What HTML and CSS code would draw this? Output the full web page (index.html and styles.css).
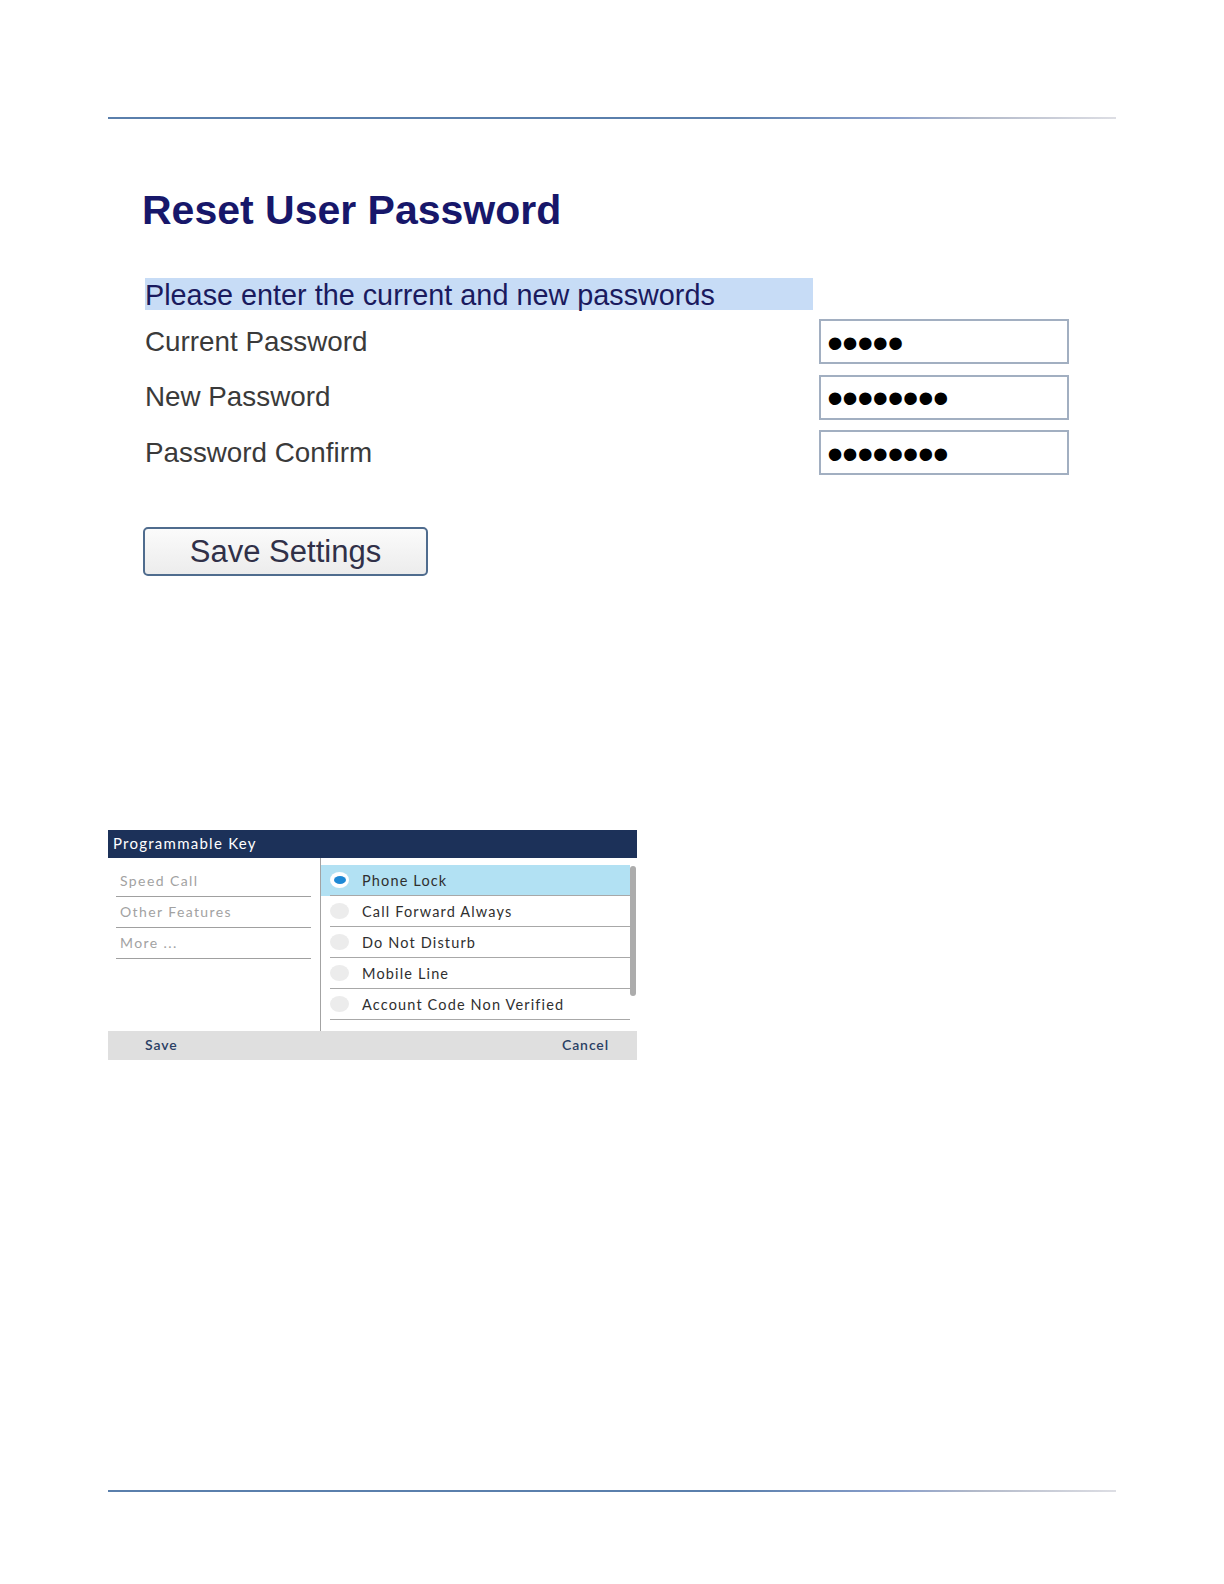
FILE: index.html
```html
<!DOCTYPE html>
<html lang="en">
<head>
  <meta charset="UTF-8">
  <title>Reset User Password</title>
  <meta name="viewport" content="width=device-width, initial-scale=1">
  <link rel="stylesheet" href="styles.css">
</head>
<body>
  <div class="page">
    <div class="rule"></div>

    <section class="reset">
      <h1 class="reset-title">Reset User Password</h1>
      <div class="reset-intro">Please enter the current and new passwords</div>

      <div class="reset-grid">
        <label class="reset-label">Current Password</label>
        <div class="pw-box">&bull;&bull;&bull;&bull;&bull;</div>

        <label class="reset-label">New Password</label>
        <div class="pw-box">&bull;&bull;&bull;&bull;&bull;&bull;&bull;&bull;</div>

        <label class="reset-label">Password Confirm</label>
        <div class="pw-box">&bull;&bull;&bull;&bull;&bull;&bull;&bull;&bull;</div>
      </div>

      <button class="save-btn" type="button">Save Settings</button>
    </section>

    <section class="pk">
      <div class="pk-head">Programmable Key</div>
      <div class="pk-body">
        <ul class="pk-cats">
          <li>Speed Call</li>
          <li>Other Features</li>
          <li>More ...</li>
        </ul>
        <div class="pk-opts">
          <ul class="pk-list">
            <li class="is-on"><div class="pk-row"><span class="radio"></span>Phone Lock</div></li>
            <li><div class="pk-row"><span class="radio"></span>Call Forward Always</div></li>
            <li><div class="pk-row"><span class="radio"></span>Do Not Disturb</div></li>
            <li><div class="pk-row"><span class="radio"></span>Mobile Line</div></li>
            <li><div class="pk-row"><span class="radio"></span>Account Code Non Verified</div></li>
          </ul>
          <div class="pk-scroll"></div>
        </div>
      </div>
      <div class="pk-foot">
        <span>Save</span>
        <span>Cancel</span>
      </div>
    </section>

    <div class="rule rule-bottom"></div>
  </div>
</body>
</html>
```

FILE: styles.css
```css
body {
  margin: 0;
  background: white;
  font-family: "Liberation Sans", Arial, sans-serif;
}
.page {
  width: 1008px;
  padding: 117px 0 0 108px;
}
.rule {
  height: 2px;
  background: linear-gradient(to right, #5a7fac 0%, #5a7fac 62%, #8a9fcb 78%, #b2b9c9 86%, #dddee4 100%);
}
.rule-bottom {
  margin-top: 430px;
}

/* reset password form */
.reset {
  margin-left: 34px;
}
.reset-title {
  margin: 67px 0 0;
  font-size: 41px;
  line-height: 48px;
  font-weight: bold;
  color: #17176a;
}
.reset-intro {
  margin: 44px 0 0 3px;
  width: 668px;
  height: 32px;
  padding-top: 1px;
  box-sizing: border-box;
  line-height: 32px;
  font-size: 28.8px;
  color: #1a1a5e;
  background: #c7dcf6;
  white-space: nowrap;
}
.reset-grid {
  margin: 9px 0 0 3px;
  width: 924px;
  display: grid;
  grid-template-columns: 1fr 250px;
  grid-auto-rows: 45px;
  row-gap: 10.5px;
  align-items: center;
}
.reset-label {
  font-size: 27.8px;
  color: #3a3a3a;
}
.pw-box {
  height: 45px;
  box-sizing: border-box;
  border: 2px solid #a2afc1;
  padding: 2px 0 0 6px;
  display: flex;
  align-items: center;
  font-size: 46px;
  line-height: 1;
  letter-spacing: -1px;
  color: #000;
}
.save-btn {
  display: block;
  margin: 52px 0 0 1px;
  width: 285px;
  height: 49px;
  border: 2px solid #4f6c8e;
  border-radius: 5px;
  background: linear-gradient(#fbfbfb, #ececec);
  font-family: "Liberation Sans", Arial, sans-serif;
  font-size: 31px;
  color: #303048;
  padding: 0;
}

/* programmable key dialog */
.pk {
  margin-top: 254px;
  width: 529px;
  font-family: Lato, "Open Sans", sans-serif;
}
.pk-head {
  height: 28px;
  line-height: 27px;
  padding-left: 5px;
  background: #1c3159;
  color: white;
  font-size: 15px;
  letter-spacing: 1.25px;
}
.pk-body {
  display: flex;
  height: 173px;
}
.pk-cats {
  list-style: none;
  margin: 0;
  width: 213px;
  box-sizing: border-box;
  padding: 8px 9px 0 8px;
  border-right: 1px solid #a3a3a3;
}
.pk-cats li {
  height: 30px;
  line-height: 29px;
  padding-left: 4px;
  border-bottom: 1px solid #a0a0a0;
  font-size: 14px;
  letter-spacing: 1.4px;
  color: #a2a2a2;
}
.pk-opts {
  flex: 1;
  position: relative;
  padding-top: 7px;
}
.pk-list {
  list-style: none;
  margin: 0;
  padding: 0;
  width: 309px;
}
.pk-list li {
  padding-left: 9px;
}
.pk-list li.is-on {
  background: #b2e1f3;
}
.pk-row {
  height: 30px;
  display: flex;
  align-items: center;
  gap: 13px;
  border-bottom: 1px solid #a8a8a8;
  font-size: 14.5px;
  letter-spacing: 1.15px;
  color: #2f2f2f;
}
.radio {
  width: 19px;
  height: 16px;
  border-radius: 50%;
  background: #ececec;
  display: flex;
  align-items: center;
  justify-content: center;
}
.is-on .radio {
  background: white;
}
.is-on .radio::after {
  content: "";
  width: 12px;
  height: 8px;
  border-radius: 50%;
  background: #1e89d5;
}
.pk-scroll {
  position: absolute;
  top: 8px;
  right: 1px;
  width: 6px;
  height: 130px;
  border-radius: 3px;
  background: #acacac;
}
.pk-foot {
  height: 29px;
  box-sizing: border-box;
  display: flex;
  align-items: center;
  justify-content: space-between;
  padding: 0 28px 3px 37px;
  background: #dfdfdf;
  font-size: 14px;
  font-weight: 600;
  letter-spacing: 0.9px;
  color: #2a4064;
}
```
